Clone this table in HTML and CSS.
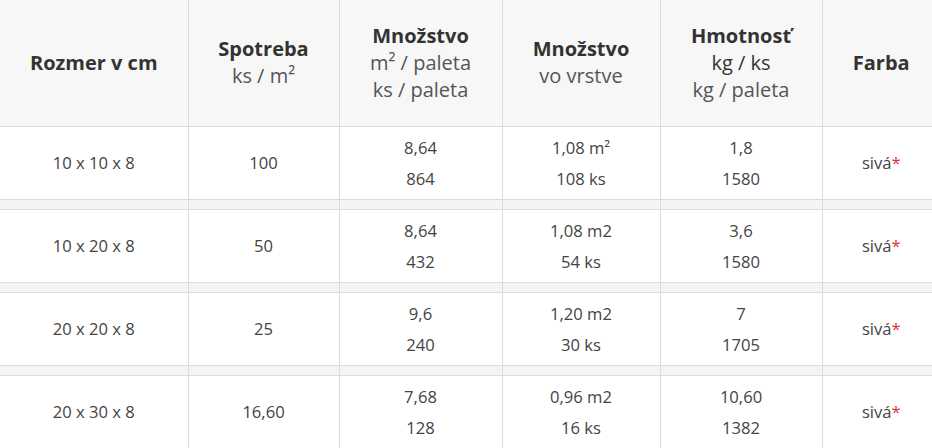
FILE: index.html
```html
<!DOCTYPE html>
<html lang="sk">
<head>
<meta charset="utf-8">
<title>Rozmery</title>
<link rel="stylesheet" href="styles.css">
</head>
<body>
<table class="spec">
  <colgroup>
    <col class="c1"><col class="c2"><col class="c3"><col class="c4"><col class="c5"><col class="c6">
  </colgroup>
  <thead>
    <tr class="head">
      <th><b>Rozmer v cm</b></th>
      <th><b>Spotreba</b><br><span class="sub">ks / m²</span></th>
      <th><b>Množstvo</b><br><span class="sub">m² / paleta</span><br><span class="sub">ks / paleta</span></th>
      <th><b>Množstvo</b><br><span class="sub">vo vrstve</span></th>
      <th><b>Hmotnosť</b><br><span class="sub dark">kg / ks</span><br><span class="sub">kg / paleta</span></th>
      <th><b>Farba</b></th>
    </tr>
  </thead>
  <tbody>
    <tr class="row">
      <td>10 x 10 x 8</td><td>100</td><td>8,64<br>864</td><td>1,08 m²<br>108 ks</td><td>1,8<br>1580</td><td>sivá<span class="req">*</span></td>
    </tr>
    <tr class="gap"><td></td><td></td><td></td><td></td><td></td><td></td></tr>
    <tr class="row">
      <td>10 x 20 x 8</td><td>50</td><td>8,64<br>432</td><td>1,08 m2<br>54 ks</td><td>3,6<br>1580</td><td>sivá<span class="req">*</span></td>
    </tr>
    <tr class="gap"><td></td><td></td><td></td><td></td><td></td><td></td></tr>
    <tr class="row">
      <td>20 x 20 x 8</td><td>25</td><td>9,6<br>240</td><td>1,20 m2<br>30 ks</td><td>7<br>1705</td><td>sivá<span class="req">*</span></td>
    </tr>
    <tr class="gap"><td></td><td></td><td></td><td></td><td></td><td></td></tr>
    <tr class="row">
      <td>20 x 30 x 8</td><td>16,60</td><td>7,68<br>128</td><td>0,96 m2<br>16 ks</td><td>10,60<br>1382</td><td>sivá<span class="req">*</span></td>
    </tr>
  </tbody>
</table>
</body>
</html>
```
FILE: styles.css
```css
html, body {
  margin: 0;
  padding: 0;
  background: #ffffff;
}
body {
  font-family: "Open Sans", "Liberation Sans", sans-serif;
  color: #444;
  overflow: hidden;
}
.spec {
  border-collapse: collapse;
  table-layout: fixed;
  width: 940px;
}
.c1 { width: 188px; }
.c2 { width: 151px; }
.c3 { width: 163px; }
.c4 { width: 158px; }
.c5 { width: 162px; }
.c6 { width: 118px; }
.spec th, .spec td {
  padding: 0;
  text-align: center;
  vertical-align: middle;
  border-left: 1px solid #dcdcdc;
  border-bottom: 1px solid #dcdcdc;
}
.spec th:first-child, .spec td:first-child {
  border-left: none;
}
.head {
  height: 126px;
  background: #f7f7f7;
}
.head th {
  font-size: 20px;
  line-height: 27px;
  font-weight: normal;
  color: #555;
  padding-bottom: 1px;
}
.head b {
  font-weight: 700;
  color: #333;
}
.sub { color: #555; }
.sub.dark { color: #333; }
.row {
  height: 73px;
  background: #fff;
}
.row td {
  font-size: 16.6px;
  line-height: 31px;
  color: #444;
}
.gap {
  height: 10px;
  background: #f4f4f4;
}
.req {
  color: #e53030;
}
```
